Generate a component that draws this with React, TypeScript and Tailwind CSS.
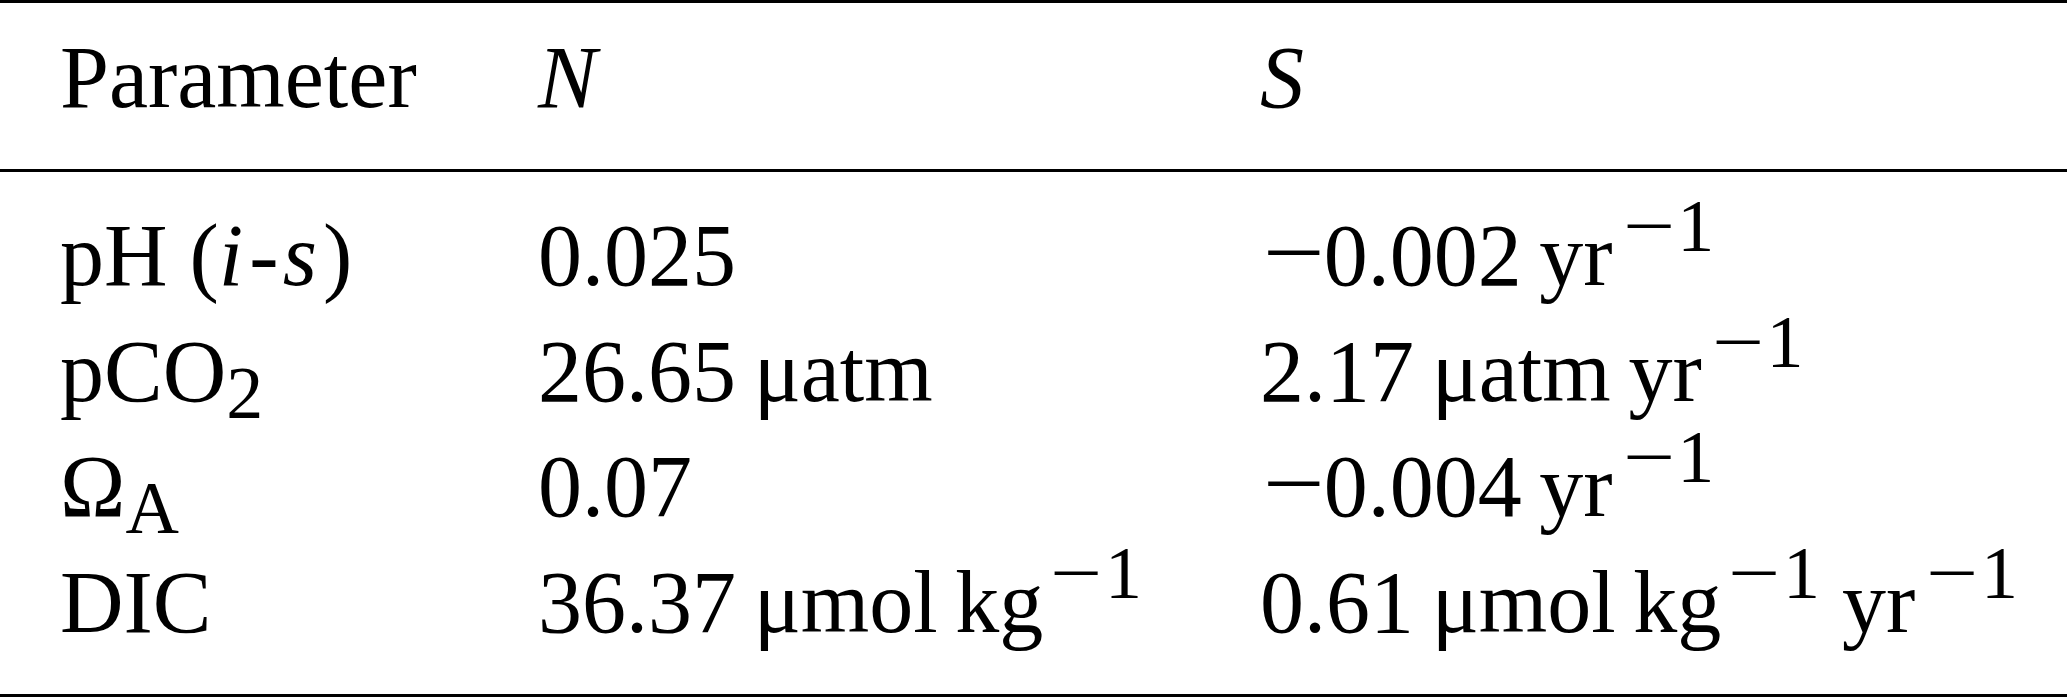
import React from "react";

// TeX minus is wider than the Times one, so stretch it
const Minus = () => (
  <span className="inline-block origin-left scale-x-[1.25] -translate-y-[3px] ml-[3px] mr-[11px]">−</span>
);

const Inv = ({ ml = "ml-[11px]" }: { ml?: string }) => (
  <sup className={`${ml} -top-[34px] text-[74px] leading-none`}>
    <span className="inline-block origin-left scale-x-[1.25] mr-[13px]">−</span>1
  </sup>
);

const rows: { p: React.ReactNode; n: React.ReactNode; s: React.ReactNode }[] = [
  {
    p: (
      <>
        pH (<i>i</i>
        <span className="ml-[6px]">-</span>
        <i className="ml-[4px]">s</i>
        <span className="ml-[6px]">)</span>
      </>
    ),
    n: "0.025",
    s: (
      <>
        <Minus />0.002{"\u2009"}yr
        <Inv ml="ml-[10px]" />
      </>
    ),
  },
  {
    p: (
      <>
        pCO<sub className="-bottom-[17px] text-[74px] leading-none">2</sub>
      </>
    ),
    n: <>26.65{"\u2009"}μatm</>,
    s: (
      <>
        2.17{"\u2009"}μatm{"\u2009"}yr
        <Inv ml="ml-[10px]" />
      </>
    ),
  },
  {
    p: (
      <>
        Ω<sub className="-bottom-[17px] text-[74px] leading-none">A</sub>
      </>
    ),
    n: "0.07",
    s: (
      <>
        <Minus />0.004{"\u2009"}yr
        <Inv ml="ml-[10px]" />
      </>
    ),
  },
  {
    p: "DIC",
    n: (
      <>
        36.37{"\u2009"}μmol{"\u2009"}kg
        <Inv ml="ml-[7px]" />
      </>
    ),
    s: (
      <>
        0.61{"\u2009"}μmol{"\u2009"}kg
        <Inv ml="ml-[7px]" />
        <span className="ml-[22px]">yr</span>
        <Inv />
      </>
    ),
  },
];

export default function App() {
  return (
    <div className="w-[2067px] h-[697px] bg-white text-black font-[family-name:Liberation_Serif,Times_New_Roman,serif] text-[88px] leading-[115.5px]">
      {/* header */}
      <div className="border-t-[3px] border-b-[3px] border-black pt-[17px] pb-[33px]">
        <div className="grid grid-cols-[478px_722px_1fr] pl-[60px] whitespace-nowrap">
          <div>Parameter</div>
          <div>
            <i>N</i>
          </div>
          <div>
            <i>S</i>
          </div>
        </div>
      </div>

      {/* body */}
      <div className="border-b-[3px] border-black pt-[26.5px] pb-[33.5px]">
        {rows.map((r, i) => (
          <div key={i} className="grid grid-cols-[478px_722px_1fr] pl-[60px] whitespace-nowrap">
            <div>{r.p}</div>
            <div>{r.n}</div>
            <div>{r.s}</div>
          </div>
        ))}
      </div>
    </div>
  );
}
